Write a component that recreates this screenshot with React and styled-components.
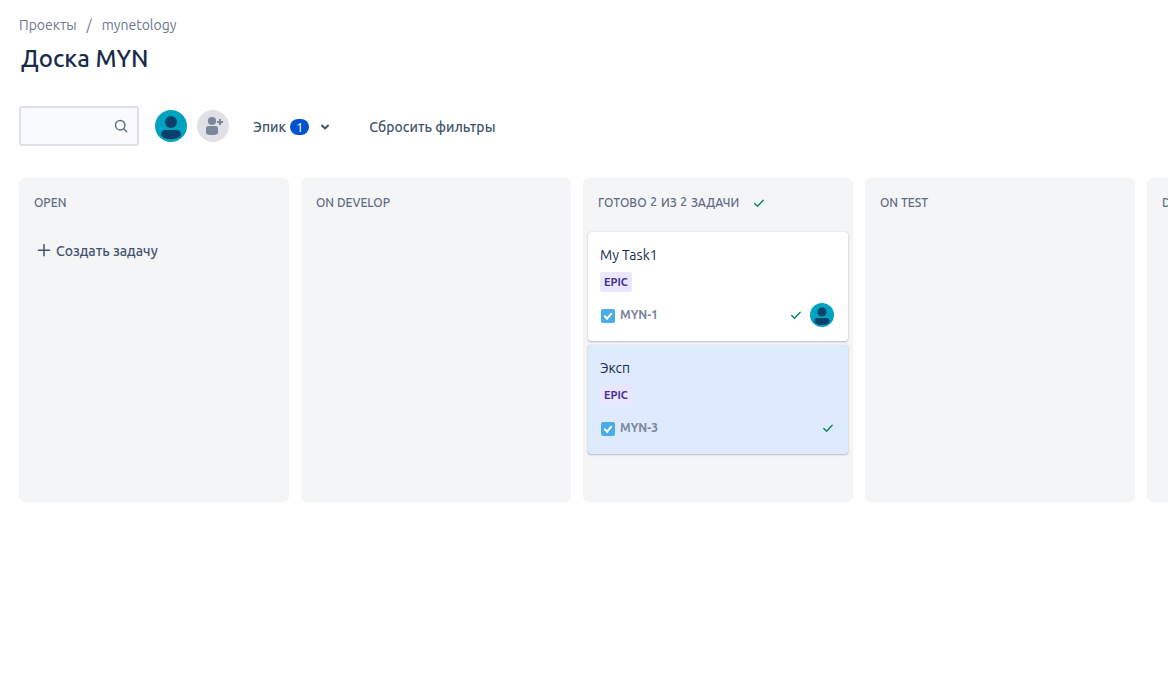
import React from "react";
import styled, { createGlobalStyle } from "styled-components";

const GlobalStyle = createGlobalStyle`
  *, *::before, *::after { box-sizing: border-box; }
  body {
    margin: 0;
    overflow-x: hidden;
    background: #fff;
    color: #172b4d;
    font: 14px/20px Ubuntu, "Noto Sans", sans-serif;
  }
  h1, h2, h3, p, ul, ol { margin: 0; padding: 0; }
  ul, ol { list-style: none; }
  button, input { font: inherit; }
  svg { display: block; flex: none; }
`;

const Page = styled.main`
  padding: 15px 0 24px 19px;
`;

const Breadcrumbs = styled.ol`
  display: flex;
  color: #6b778c;
  line-height: 20px;

  li + li::before {
    content: "/";
    display: inline-block;
    width: 25px;
    text-align: center;
  }
`;

const Crumb = styled.a`
  color: inherit;
  text-decoration: none;
`;

const Title = styled.h1`
  padding: 10px 2px 8px;
  font-size: 24px;
  line-height: 28px;
  font-weight: 500;
`;

const Toolbar = styled.div`
  display: flex;
  align-items: center;
  margin-top: 25px;
`;

const SearchBox = styled.label`
  display: flex;
  align-items: center;
  width: 120px;
  height: 40px;
  padding: 0 8px;
  border: 2px solid #dfe1e6;
  border-radius: 3px;
  background: #fafbfc;
  color: #5e6c84;
`;

const SearchInput = styled.input`
  flex: 1;
  min-width: 0;
  padding: 0;
  border: 0;
  outline: 0;
  background: transparent;
  color: #172b4d;
`;

const People = styled.div`
  display: flex;
  gap: 10px;
  margin: 0 16px;
`;

const AvatarButton = styled.button`
  padding: 0;
  border: 0;
  border-radius: 50%;
  background: transparent;
`;

const TextButton = styled.button`
  display: flex;
  align-items: center;
  gap: 4px;
  height: 32px;
  padding: 0 8px;
  border: 0;
  border-radius: 3px;
  background: transparent;
  color: #42526e;
  font-weight: 500;
  white-space: nowrap;
`;

const CreateButton = styled(TextButton)`
  gap: 5px;
  margin-top: 7px;
  padding: 0 14px;
`;

const Filters = styled.div`
  display: flex;
  gap: 20px;
  padding-top: 2px;
`;

const Badge = styled.span`
  margin-right: 4px;
  padding: 0 6px;
  border-radius: 8px;
  background: #0052cc;
  color: #fff;
  font-size: 13px;
  line-height: 16px;
  font-weight: 400;
`;

const Board = styled.div`
  display: flex;
  gap: 12px;
  margin-top: 32px;
  overflow: hidden;
`;

const Column = styled.section`
  flex: 0 0 270px;
  min-height: 324px;
  padding: 0 4px 47px;
  border-radius: 6px;
  background: #f4f5f7;
`;

const ColumnHeader = styled.header`
  display: flex;
  align-items: center;
  gap: 14px;
  height: 50px;
  padding: 0 11px;
  color: #5e6c84;
`;

const ColumnTitle = styled.h2`
  font-size: 12px;
  line-height: 16px;
  font-weight: 500;
  text-transform: uppercase;
  white-space: nowrap;
`;

const Count = styled.span`
  padding: 0 1px;
  vertical-align: 1px;
  line-height: 12px;
`;

const CardList = styled.ul`
  display: grid;
  gap: 4px;
  margin-top: 4px;
`;

const Card = styled.li`
  margin: 0 1px;
  padding: 13px 14px 14px 12px;
  border-radius: 3px;
  background: ${(p) => (p.$selected ? "#deebff" : "#fff")};
  box-shadow: 0 1px 2px rgba(9, 30, 66, 0.25), 0 0 1px rgba(9, 30, 66, 0.25);
`;

const CardTitle = styled.h3`
  font-size: 14px;
  line-height: 20px;
  font-weight: 400;
`;

const Epic = styled.span`
  display: block;
  width: fit-content;
  margin: 7px 0 11px;
  padding: 0 4px;
  border-radius: 3px;
  background: #eae6ff;
  color: #403294;
  font-size: 11px;
  line-height: 20px;
  font-weight: 700;
`;

const CardFooter = styled.div`
  display: flex;
  align-items: center;
  height: 24px;
`;

const IssueKey = styled.a`
  margin: 0 auto 0 4px;
  color: #7a869a;
  font-size: 12px;
  line-height: 16px;
  font-weight: 700;
  text-decoration: none;
`;

const CardStatus = styled.div`
  display: flex;
  align-items: center;
  gap: 8px;
`;

const Avatar = ({ size = 32 }) => (
  <svg width={size} height={size} viewBox="0 0 32 32" aria-hidden="true">
    <circle cx="16" cy="16" r="16" fill="#00a3bf" />
    <circle cx="16" cy="12" r="6" fill="#09416a" />
    <path d="M6 24.5A4.5 4.5 0 0 1 10.500 20h11a4.500 4.500 0 0 1 4.500 4.500v.7C24.200 28 21 29.300 16 29.300S7.800 28 6 25.200z" fill="#09416a" />
  </svg>
);

const AddPerson = () => (
  <svg width="32" height="32" viewBox="0 0 32 32" aria-hidden="true">
    <circle cx="16" cy="16" r="16" fill="#dfe1e6" />
    <g fill="#7a869a">
      <circle cx="15" cy="11" r="4.100" />
      <path d="M9 18.200A2.200 2.200 0 0 1 11.200 16h7.600a2.200 2.200 0 0 1 2.200 2.200v5.200C19.500 24.600 17.500 25 15 25s-4.500-.4-6-1.600zM22 9h2v2h2v2h-2v2h-2v-2h-2v-2h2z" />
    </g>
  </svg>
);

const SearchIcon = () => (
  <svg width="16" height="16" viewBox="0 0 16 16" fill="none" stroke="currentColor" strokeWidth="1.500" strokeLinecap="round" aria-hidden="true">
    <circle cx="7.200" cy="7.200" r="4.700" />
    <path d="m10.700 10.700 3 3" />
  </svg>
);

const Chevron = () => (
  <svg width="16" height="16" viewBox="0 0 16 16" fill="none" stroke="currentColor" strokeWidth="2" strokeLinecap="round" strokeLinejoin="round" aria-hidden="true">
    <path d="m5 6.500 3 3 3-3" />
  </svg>
);

const Plus = () => (
  <svg width="14" height="14" viewBox="0 0 14 14" fill="none" stroke="currentColor" strokeWidth="1.500" strokeLinecap="round" aria-hidden="true">
    <path d="M7 .7v11M1.500 6.200h11" />
  </svg>
);

const Done = () => (
  <svg width="12" height="12" viewBox="0 0 12 12" fill="none" stroke="#00875a" strokeWidth="1.400" strokeLinecap="round" strokeLinejoin="round" role="img" aria-label="Готово">
    <path d="m1.800 6.500 2.700 2.800 5.700-6" />
  </svg>
);

const TaskIcon = () => (
  <svg width="16" height="16" viewBox="0 0 16 16" aria-hidden="true">
    <rect x="1" y="2" width="14" height="14" rx="2" fill="#4bade8" />
    <path d="m4.800 9.200 2.300 2.500 4.200-5" fill="none" stroke="#fff" strokeWidth="2" strokeLinecap="round" />
  </svg>
);

const tasks = [
  { key: "MYN-1", title: "My Task1", epic: "EPIC", assigned: true },
  { key: "MYN-3", title: "Эксп", epic: "EPIC", selected: true },
];

const columns = [
  { id: "open", title: "Open", canCreate: true },
  { id: "develop", title: "On develop" },
  {
    id: "ready",
    title: <>Готово <Count>2</Count> из <Count>2</Count> задачи</>,
    done: true,
    tasks,
  },
  { id: "test", title: "On test" },
  { id: "done", title: "Done" },
];

const TaskCard = ({ task }) => (
  <Card $selected={task.selected}>
    <CardTitle>{task.title}</CardTitle>
    <Epic>{task.epic}</Epic>
    <CardFooter>
      <TaskIcon />
      <IssueKey href={`#${task.key}`}>{task.key}</IssueKey>
      <CardStatus>
        <Done />
        {task.assigned && <Avatar size={24} />}
      </CardStatus>
    </CardFooter>
  </Card>
);

export default function App() {
  return (
    <>
      <GlobalStyle />
      <Page>
        <nav>
          <Breadcrumbs>
            <li><Crumb href="#projects">Проекты</Crumb></li>
            <li><Crumb href="#mynetology">mynetology</Crumb></li>
          </Breadcrumbs>
        </nav>
        <Title>Доска MYN</Title>
        <Toolbar>
          <SearchBox>
            <SearchInput type="text" aria-label="Поиск" />
            <SearchIcon />
          </SearchBox>
          <People>
            <AvatarButton type="button" aria-label="Участник"><Avatar /></AvatarButton>
            <AvatarButton type="button" aria-label="Добавить участника"><AddPerson /></AvatarButton>
          </People>
          <Filters>
            <TextButton type="button">
              Эпик <Badge>1</Badge>
              <Chevron />
            </TextButton>
            <TextButton type="button">Сбросить фильтры</TextButton>
          </Filters>
        </Toolbar>
        <Board>
          {columns.map((column) => (
            <Column key={column.id}>
              <ColumnHeader>
                <ColumnTitle>{column.title}</ColumnTitle>
                {column.done && <Done />}
              </ColumnHeader>
              {column.canCreate && (
                <CreateButton type="button">
                  <Plus />
                  Создать задачу
                </CreateButton>
              )}
              {column.tasks && (
                <CardList>
                  {column.tasks.map((task) => <TaskCard key={task.key} task={task} />)}
                </CardList>
              )}
            </Column>
          ))}
        </Board>
      </Page>
    </>
  );
}
